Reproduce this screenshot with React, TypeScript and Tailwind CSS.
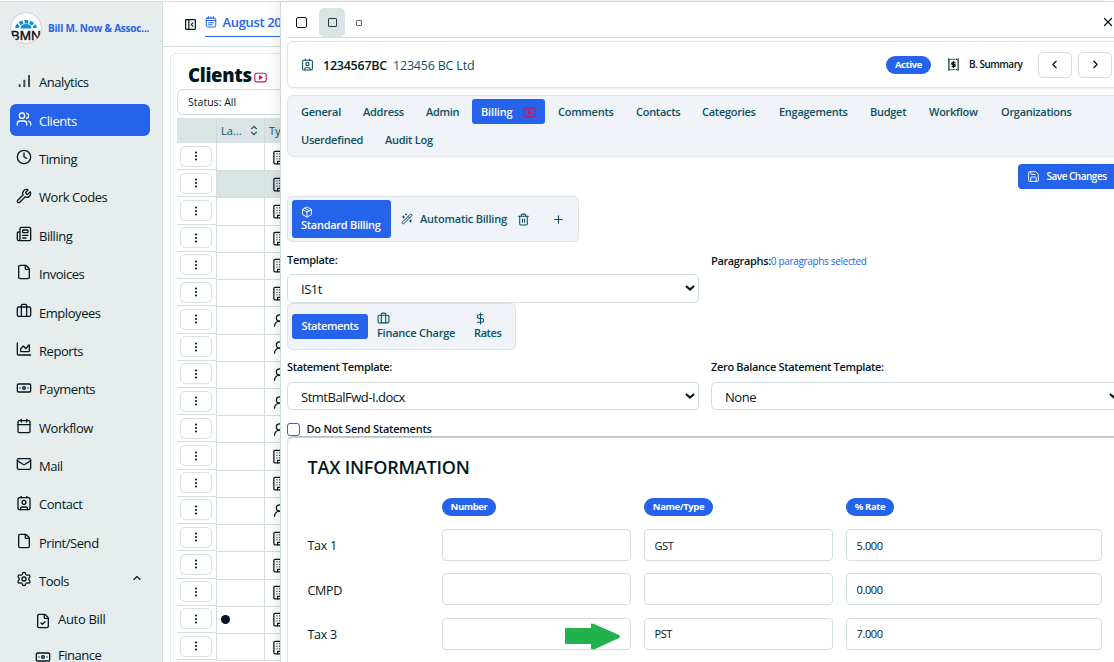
import React, { useState } from "react";
import {
  Banknote,
  Calendar,
  ChevronLeft,
  ChevronRight,
  ChevronUp,
  Clock,
  Contact,
  DollarSign,
  EllipsisVertical,
  File,
  FileCheck,
  Mail,
  Newspaper,
  Package,
  Plus,
  Save,
  Settings,
  Trash2,
  Users,
  UserRound,
  WandSparkles,
  Wrench,
  X,
} from "lucide-react";

type IconProps = { className?: string; strokeWidth?: number };

const iconBase = {
  viewBox: "0 0 24 24",
  fill: "none",
  stroke: "currentColor",
  strokeWidth: 2,
  strokeLinecap: "round" as const,
  strokeLinejoin: "round" as const,
};

const BarsIcon = ({ className }: IconProps) => (
  <svg {...iconBase} strokeWidth={3} strokeLinecap="butt" className={className}>
    <path d="M5.500 21v-4M12.500 21V10M19.500 21V3" stroke="#3b4b50" />
  </svg>
);

const SuitcaseIcon = ({ className }: IconProps) => (
  <svg {...iconBase} className={className}>
    <rect x="2" y="6" width="20" height="14" rx="2" />
    <path d="M8 20V4a2 2 0 0 1 2-2h4a2 2 0 0 1 2 2v16" />
  </svg>
);

const AreaIcon = ({ className }: IconProps) => (
  <svg {...iconBase} className={className}>
    <path d="M2 3v16a2 2 0 0 0 2 2h18" />
    <path d="M7 11.500l4-4 4 4 4-5.500h1V15a1 1 0 0 1-1 1H8a1 1 0 0 1-1-1z" />
  </svg>
);

const VideoIcon = ({ className }: IconProps) => (
  <svg {...iconBase} className={className}>
    <rect x="1.500" y="4" width="21" height="16" rx="4" />
    <path d="M10 9v6l5-3z" fill="currentColor" />
  </svg>
);

const PanelIcon = ({ className }: IconProps) => (
  <svg {...iconBase} strokeWidth={2.2} strokeLinejoin="miter" className={className}>
    <rect x="3" y="3" width="18" height="18" rx="1" />
    <path d="M9 3v18M16.500 9l-3 3 3 3" />
  </svg>
);

const PeriodIcon = ({ className }: IconProps) => (
  <svg {...iconBase} className={className}>
    <rect x="2.500" y="4" width="19" height="18" rx="2" />
    <path d="M7 1.500v4M12 1.500v4M17 1.500v4M2.500 9h19M7 13.500h10M7 17.500h7" />
  </svg>
);

const ReceiptIcon = ({ className }: IconProps) => (
  <svg {...iconBase} strokeLinecap="butt" className={className}>
    <path d="M3.500 1v22M20.500 1v22" />
    <path d="M3 2.500h18M3 21.500h18" strokeDasharray="2 1.500" />
    <path d="M15.500 8.500H10.500a1.750 1.750 0 0 0 0 3.500h3a1.750 1.750 0 0 1 0 3.500H8.500M12 5.500v13" strokeWidth={2.6} />
  </svg>
);

const BuildingIcon = ({ className }: IconProps) => (
  <svg {...iconBase} className={className}>
    <rect x="3" y="2" width="18" height="20" rx="2" />
    <path d="M9 22v-4h6v4M8 6h.01M12 6h.01M16 6h.01M8 10h.01M12 10h.01M16 10h.01M8 14h.01M12 14h.01M16 14h.01" />
  </svg>
);

const SelectArrow = () => (
  <svg viewBox="0 0 10 6" className="pointer-events-none absolute top-[11px] right-[4px] h-[6px] w-[10px]">
    <path d="M1 1l4 3.500L9 1" fill="none" stroke="#03181e" strokeWidth="2.200" />
  </svg>
);

const Logo = () => (
  <svg viewBox="0 0 32 32" className="h-8 w-8 shrink-0">
    <defs>
      <clipPath id="logoClip">
        <circle cx="16" cy="16" r="15.500" />
      </clipPath>
    </defs>
    <circle cx="16" cy="16" r="15.500" fill="#fff" stroke="#c3cfe6" />
    <g clipPath="url(#logoClip)">
      <path d="M10.500 16.500a5.500 4.500 0 0 1 11 0z" fill="#1191d0" />
      <path d="M6.800 16a9.300 7.300 0 0 1 18.400 0" fill="none" stroke="#1191d0" strokeWidth="3.600" strokeDasharray="3.700 1.500" />
      <text x="15.800" y="28" textAnchor="middle" fontSize="13" textLength="30" lengthAdjust="spacingAndGlyphs" fontFamily="Liberation Sans, sans-serif" fill="#0b0b0b" stroke="#0b0b0b" strokeWidth="0.400">
        BMN
      </text>
    </g>
  </svg>
);

const menu = [
  { label: "Analytics", icon: BarsIcon },
  { label: "Clients", icon: Users },
  { label: "Timing", icon: Clock },
  { label: "Work Codes", icon: Wrench },
  { label: "Billing", icon: Newspaper },
  { label: "Invoices", icon: File },
  { label: "Employees", icon: SuitcaseIcon },
  { label: "Reports", icon: AreaIcon },
  { label: "Payments", icon: Banknote },
  { label: "Workflow", icon: Calendar },
  { label: "Mail", icon: Mail },
  { label: "Contact", icon: Contact },
  { label: "Print/Send", icon: File },
  { label: "Tools", icon: Settings },
];

const rows = "bbbbbbpppppbbpbbbbb".split("");

const tabs = [
  ["General", "w-[62px]"],
  ["Address", "w-[63px]"],
  ["Admin", "w-[55px]"],
  ["Billing", "w-[73px] mr-1"],
  ["Comments", "w-[78px]"],
  ["Contacts", "w-[66px]"],
  ["Categories", "w-[77px]"],
  ["Engagements", "w-[91px]"],
  ["Budget", "w-[59px]"],
  ["Workflow", "w-[72px]"],
  ["Organizations", "w-[92px]"],
  ["Userdefined", "w-[84px]"],
  ["Audit Log", "w-[72px]"],
];

const taxes = [
  { name: "Tax 1", type: "GST", rate: "5.000" },
  { name: "CMPD", type: "", rate: "0.000" },
  { name: "Tax 3", type: "PST", rate: "7.000" },
];

const Sidebar = () => {
  const [active, setActive] = useState("Clients");

  return (
    <aside className="h-full w-[163px] shrink-0 overflow-hidden border-r border-[#d2dfde] bg-[#e7edec] px-[10px] pt-[10px]">
      <div className="flex h-8 items-center gap-[6px]">
        <Logo />
        <span className="text-[10px] font-bold tracking-[-0.2px] whitespace-nowrap text-[#2563eb]">Bill M. Now &amp; Assoc...</span>
      </div>
      <nav className="mt-[22px]">
        {menu.map(({ label, icon: Icon }) => (
          <button
            key={label}
            onClick={() => setActive(label)}
            className={`mb-[6.38px] flex h-8 w-[140px] items-center rounded-md pl-[6px] text-[13px] tracking-[-0.45px] ${
              active === label ? "bg-[#2563eb] text-white" : "text-[#03181e]"
            }`}
          >
            <Icon className="mr-[7px] mb-[3px] h-4 w-4" strokeWidth={2} />
            <span className="pt-[2px]">{label}</span>
            {label === "Tools" && <ChevronUp className="mr-[7.500px] mb-[5px] ml-auto h-3 w-3" strokeWidth={2.2} />}
          </button>
        ))}
        <div className="flex h-8 items-center pl-[25px] text-[13px] tracking-[-0.3px] text-[#03181e]">
          <FileCheck className="mt-[4px] mr-[7px] h-4 w-4" />
          <span className="pt-px">Auto Bill</span>
        </div>
        <div className="mt-[4px] flex h-8 items-center pl-[25px] text-[13px] tracking-[-0.5px] text-[#03181e]">
          <Banknote className="mt-[4px] mr-[7px] h-4 w-4" />
          <span className="leading-[14px]">Finance</span>
        </div>
      </nav>
    </aside>
  );
};

const ClientList = () => (
  <main className="h-full flex-1 overflow-hidden">
    <div className="flex h-[45px] items-center border-b border-[#d2dfde] pl-[21px]">
      <PanelIcon className="h-[13px] w-[13px]" />
      <div className="ml-[8px] flex h-[25px] w-[120px] items-center border-b border-[#2563eb] pb-[1px] text-[#2563eb]">
        <PeriodIcon className="mr-[5.500px] mb-[2px] h-3 w-3" />
        <span className="text-[13px] font-semibold tracking-[-0.35px] whitespace-nowrap">August 2025</span>
      </div>
    </div>
    <section className="mt-[6px] ml-[7px] h-[640px] rounded-md border border-[#e3eaea] pt-[9px] pl-[6px]">
      <div className="flex h-[24px] items-center pl-[11px]">
        <h1 className="text-[18.500px] font-extrabold tracking-[-0.3px]">Clients</h1>
        <VideoIcon className="mt-[4px] ml-[2px] h-[13px] w-[13px] text-[#d3124f]" />
      </div>
      <div className="mt-[2px] flex h-[26px] items-center rounded-md border border-[#d2dfde] pt-px pl-[10px] text-[10.500px] tracking-[0.02px]">Status: All</div>
      <div className="mt-[3px] flex h-[25px] items-center bg-[#dbe4e4] text-[11px] text-[#0c5163]">
        <div className="h-full w-10 border-r border-[#cddada]" />
        <div className="flex h-full w-12 items-center justify-between border-r border-[#cddada] px-[4px]">
          <span className="pt-[2px]">La...</span>
          <svg viewBox="0 0 8 12" className="mr-[2px] h-[11px] w-[8px]" fill="none" stroke="currentColor" strokeWidth="1.300">
            <path d="M1 4.500L4 1.500l3 3M1 7.500l3 3 3-3" />
          </svg>
        </div>
        <span className="pt-[2px] pl-[4px]">Type</span>
      </div>
      {rows.map((kind, i) => (
        <div key={i} className="flex h-[27.220px]">
          <div className="flex w-10 items-center justify-center border-r border-b border-[#d2dfde] pr-[1px]">
            <button className="flex h-[21px] w-8 items-center justify-center rounded-[5px] border border-[#d7e2e1]">
              <EllipsisVertical className="h-3 w-3" strokeWidth={2.2} />
            </button>
          </div>
          <div className={`relative top-px flex w-12 items-center border-r border-b border-[#d2dfde] pl-1 ${i === 1 ? "bg-[#dbe4e4]" : ""}`}>
            {i === 17 && <span className="h-[9px] w-[9px] rounded-full bg-[#03181e]" />}
          </div>
          <div className={`relative top-px flex flex-1 items-center border-b border-[#d2dfde] pl-[7px] ${i === 1 ? "bg-[#dbe4e4]" : ""}`}>
            {kind === "b" ? <BuildingIcon className="h-[15px] w-[15px]" /> : <UserRound className="h-[15px] w-[15px]" />}
          </div>
        </div>
      ))}
    </section>
  </main>
);

type SelectFieldProps = { label: string; value: string; labelClass: string; className: string };

const SelectField = ({ label, value, labelClass, className }: SelectFieldProps) => (
  <label className="block w-[412px] text-[11px] font-semibold">
    <span className={`block leading-[16px] ${labelClass}`}>{label}</span>
    <span className="relative block">
      <select className={`block w-full appearance-none rounded-[5px] border border-[#d2dfde] bg-white pt-[3px] pl-[13px] text-[13px] font-normal tracking-[-0.48px] outline-none ${className}`}>
        <option>{value}</option>
      </select>
      <SelectArrow />
    </span>
  </label>
);

const Pill = ({ children, className = "" }: { children: React.ReactNode; className?: string }) => (
  <span className={`flex h-[18px] items-center justify-center rounded-full bg-[#2563eb] pt-px text-[9.500px] font-bold tracking-[-0.4px] text-white ${className}`}>
    {children}
  </span>
);

const inputStyle = "h-8 rounded-[4px] border border-[#d2dfde] bg-white px-[9.500px] text-[11px] tracking-[-0.4px] outline-none";

const TaxInformation = () => (
  <section className="h-[240px] w-[836px] rounded-t-md border border-[#dbe3e3] border-t-[#c3cfcf] pt-[17px] pl-[19.500px] shadow-[0_-1px_0_#b9c5c6]">
    <h2 className="h-[24px] text-[18px] leading-[24px] font-semibold tracking-[-0.2px]">TAX INFORMATION</h2>
    <div className="mt-[19px] flex pl-[134.500px]">
      <div className="w-[202px]"><Pill className="w-[54px]">Number</Pill></div>
      <div className="w-[202px]"><Pill className="w-[69px]">Name/Type</Pill></div>
      <Pill className="w-12">% Rate</Pill>
    </div>
    <div className="mt-[13px] flex flex-col gap-[12.400px]">
      {taxes.map((tax) => (
        <div key={tax.name} className="relative flex items-center gap-[13px]">
          <span className="w-[121.500px] pt-[3px] text-[12.500px] tracking-[-0.3px]">{tax.name}</span>
          <input className={`${inputStyle} w-[189px]`} />
          <input className={`${inputStyle} w-[189px]`} defaultValue={tax.type} />
          <input className={`${inputStyle} w-[256px]`} defaultValue={tax.rate} />
          {tax.name === "Tax 3" && (
            <svg viewBox="0 0 56 27" className="absolute top-[5px] left-[257px] h-[27px] w-[56px]" fill="#22b14c">
              <path d="M1 5h25V1q0-1 3 0l25 11q2 1.500 0 3L30 26q-4 1-4-1v-4H1q-1 0-1-1V6q0-1 1-1z" />
            </svg>
          )}
        </div>
      ))}
    </div>
  </section>
);

const ClientDrawer = () => {
  const [tab, setTab] = useState("Billing");

  return (
    <div className="absolute top-0 right-0 bottom-0 w-[834px] overflow-hidden border-l border-[#cbd9d9] bg-white pl-[6px] shadow-[-4px_0_10px_rgba(0,0,0,0.08)]">
      <div className="flex h-9 w-[836px] items-end border-b border-[#d2dfde]">
        <span className="mb-[9px] ml-[9px] h-[11px] w-[11px] rounded-[2px] border border-[#03181e]" />
        <span className="ml-[12px] flex h-[29px] w-[26px] items-center justify-center rounded-[5px] bg-[#dbe4e4]">
          <span className="h-[9px] w-[9px] rounded-[1px] border border-[#26393f]" />
        </span>
        <span className="mb-[11px] ml-[11px] h-[6px] w-[6px] rounded-[1px] border border-[#5a686d]" />
        <X className="mr-[8px] mb-[8px] ml-auto h-[14px] w-[14px]" strokeWidth={2.2} />
      </div>

      <header className="mt-[3px] flex h-[47px] w-[836px] items-center rounded-md border border-[#e0e5e6] pl-[13px] shadow-[0_1px_2px_rgba(0,0,0,0.08)]">
        <Contact className="mr-[9px] h-[13px] w-[13px] text-[#0c5163]" />
        <span className="w-[70px] pt-[3px] text-[12.500px] font-semibold tracking-[-0.25px]">1234567BC</span>
        <span className="pt-[3px] text-[12.500px] tracking-[-0.2px] text-[#0c5163]">123456 BC Ltd</span>
        <Pill className="mr-[16px] ml-auto w-[45px]">Active</Pill>
        <ReceiptIcon className="mr-[9px] h-[13px] w-[13px]" />
        <span className="w-[69px] text-[10px] font-semibold tracking-[-0.5px]">B. Summary</span>
        <button className="mr-[6px] flex h-[26px] w-[34px] items-center justify-center rounded-[5px] border border-[#d2dfde] pr-px">
          <ChevronLeft className="h-[13px] w-[13px]" strokeWidth={2.4} />
        </button>
        <button className="mr-[10px] flex h-[26px] w-[34px] items-center justify-center rounded-[5px] border border-[#d2dfde]">
          <ChevronRight className="h-[13px] w-[13px]" strokeWidth={2.4} />
        </button>
      </header>

      <div className="mt-[7px] flex h-[62px] w-[836px] flex-wrap content-start gap-y-[3px] rounded-md border border-[#dfe2e7] bg-[#f0f3f8] pt-[3px] pr-[20px] pl-[4px]">
        {tabs.map(([name, width]) => (
          <button
            key={name}
            onClick={() => setTab(name)}
            className={`flex h-[25px] items-center pt-px pl-[9px] text-[11px] font-semibold whitespace-nowrap ${width} ${
              tab === name ? "rounded-[3px] bg-[#2563eb] tracking-[-0.15px] text-white" : "tracking-[-0.27px] text-[#0c5163]"
            }`}
          >
            {name}
            {name === "Billing" && <VideoIcon className="ml-[10.500px] h-[13px] w-[13px] text-[#d3124f]" />}
          </button>
        ))}
      </div>

      <button className="mt-[7px] ml-[731px] flex h-[25px] w-[105px] items-center rounded-[4px] bg-[#2563eb] pl-[9px] text-[10px] font-semibold tracking-[-0.5px] whitespace-nowrap text-white">
        <Save className="mr-[6.500px] h-[13px] w-[13px]" strokeWidth={1.7} />
        Save Changes
      </button>

      <div className="mt-[7px] flex h-[46px] w-[292px] items-center rounded-[5px] border border-[#dfe2e7] bg-[#f0f3f8] pl-[4px] text-[11px] font-semibold text-[#0c5163]">
        <button className="h-[38px] w-[99px] rounded-[3px] bg-[#2563eb] pl-[9px] text-left tracking-[-0.28px] whitespace-nowrap text-white">
          <Package className="h-3 w-3" />
          <span className="block leading-[14px]">Standard Billing</span>
        </button>
        <WandSparkles className="ml-[10px] h-3 w-3" />
        <span className="ml-[7px] w-[97px] tracking-[-0.22px]">Automatic Billing</span>
        <Trash2 className="h-[13px] w-[13px]" />
        <Plus className="ml-[22px] h-[13px] w-[13px]" />
      </div>

      <div className="mt-[10px] flex w-[836px] gap-[12px]">
        <SelectField label="Template:" value="IS1t" labelClass="h-[22px] tracking-[-0.3px]" className="h-[29px]" />
        <div className="flex h-[18px] items-center text-[11px] font-semibold tracking-[-0.35px]">
          Paragraphs:
          <span className="text-[10px] font-normal tracking-[-0.34px] text-[#2563eb]">0 paragraphs selected</span>
        </div>
      </div>

      <div className="flex h-[47px] w-[229px] items-center rounded-[5px] border border-[#dfe2e7] bg-[#f0f3f8] pl-[4px] text-[11px] font-semibold text-[#0c5163]">
        <button className="h-[25px] w-[76px] rounded-[3px] bg-[#2563eb] tracking-[-0.4px] text-white">Statements</button>
        <div className="mb-[2px] ml-[9px] w-[97px]">
          <SuitcaseIcon className="h-[13px] w-[13px]" />
          <span className="block leading-[15px] tracking-[-0.24px]">Finance Charge</span>
        </div>
        <div className="mb-[2px]">
          <DollarSign className="h-[13px] w-[13px]" />
          <span className="block leading-[15px] tracking-[-0.4px]">Rates</span>
        </div>
      </div>

      <div className="mt-[9px] flex w-[836px] gap-[12px]">
        <SelectField label="Statement Template:" value="StmtBalFwd-I.docx" labelClass="h-[23px] tracking-[-0.35px]" className="h-[28px]" />
        <SelectField label="Zero Balance Statement Template:" value="None" labelClass="h-[23px] tracking-[-0.33px]" className="h-[28px]" />
      </div>

      <label className="mt-[12px] mb-px flex h-[14px] items-center gap-[6.500px] text-[11px] font-semibold tracking-[-0.23px]">
        <input type="checkbox" className="h-[13px] w-[13px] appearance-none rounded-[3px] border border-[#2563eb] bg-white" />
        <span className="pt-px">Do Not Send Statements</span>
      </label>
      <TaxInformation />
    </div>
  );
};

const App: React.FC = () => {
  return (
    <div className="h-[662px] w-[1114px] overflow-hidden bg-white pt-px font-['Open_Sans',sans-serif] text-[#03181e]">
      <div className="relative flex h-[661px] border-t border-[#d2dfde]">
        <Sidebar />
        <ClientList />
        <ClientDrawer />
      </div>
    </div>
  );
};

export default App;
